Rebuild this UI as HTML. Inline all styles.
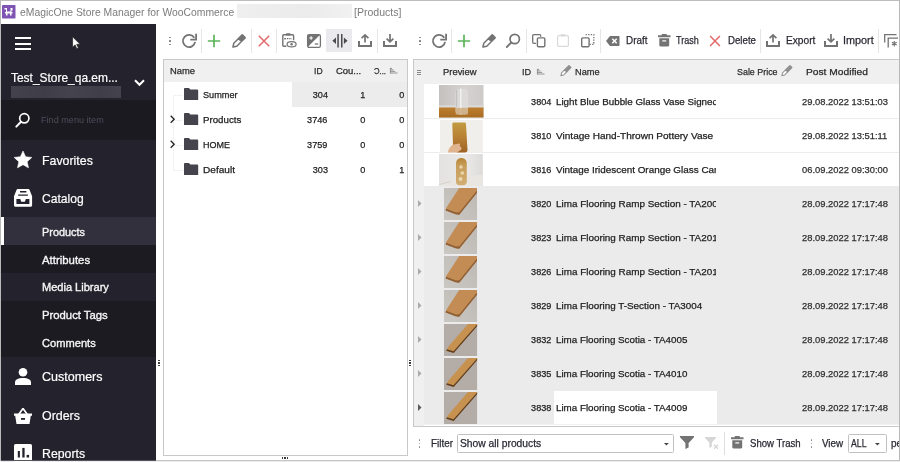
<!DOCTYPE html>
<html><head><meta charset="utf-8"><title>eMagicOne Store Manager for WooCommerce</title>
<style>

*{box-sizing:border-box;margin:0;padding:0}
html,body{width:900px;height:462px;overflow:hidden;background:#fff}
body{position:relative;font-family:"Liberation Sans",sans-serif;color:#262626}
.a{position:absolute}
.t{position:absolute;white-space:nowrap;line-height:1;transform-origin:0 50%}
.d{-webkit-text-stroke:.25px currentColor}
.d2{-webkit-text-stroke:.35px currentColor}
.d1{-webkit-text-stroke:.2px currentColor}
svg{position:absolute;overflow:visible}

</style></head>
<body>
<div class="a" style="left:0px;top:0px;width:900px;height:1px;background:#bdbdbd;"></div>
<div class="a" style="left:0px;top:0px;width:1px;height:462px;background:#b9b9b9;"></div>
<div class="a" style="left:898.5px;top:0px;width:1.5px;height:462px;background:#b8b8b8;"></div>
<div class="a" style="left:0px;top:460px;width:900px;height:1px;background:#c4c4c4;"></div>
<div class="a" style="left:0px;top:461px;width:900px;height:1px;background:#ececec;"></div>
<svg style="left:1.5px;top:5px" width="13.5" height="13.5" viewBox="0 0 27 27"><rect width="27" height="27" rx="1.5" fill="#7f54b3"/><path d="M5 6h5v7h7V6h4v5h-2v3h2v3h-2v4h-3v-4h-5v4H8v-4H6v-3h2V9H5z" fill="#fff"/></svg>
<span class="t" style="left:20px;top:7px;font-size:11.2px;color:#7b7b7b;transform:scaleX(0.9271);">eMagicOne Store Manager for WooCommerce</span>
<div class="a" style="left:237px;top:3.5px;width:115px;height:14px;background:linear-gradient(90deg,#efefef,#ebebeb 60%,#f1f1f1);border-radius:1px;filter:blur(.6px)"></div>
<span class="t" style="left:353.5px;top:7px;font-size:11.2px;color:#7b7b7b;transform:scaleX(0.9420);">[Products]</span>
<div class="a" style="left:1px;top:24px;width:155px;height:436px;background:#24232d;"></div>
<div class="a" style="left:1px;top:100px;width:155px;height:40px;background:#1b1a21;"></div>
<div class="a" style="left:1px;top:217px;width:155px;height:28px;background:#32303c;"></div>
<div class="a" style="left:1px;top:217px;width:3px;height:28px;background:#ffffff;"></div>
<div class="a" style="left:1px;top:245px;width:155px;height:28px;background:#1c1b22;"></div>
<div class="a" style="left:1px;top:301px;width:155px;height:56px;background:#1c1b22;"></div>
<div class="a" style="left:15px;top:37px;width:16px;height:2px;background:#fff;"></div>
<div class="a" style="left:15px;top:42.5px;width:16px;height:2px;background:#fff;"></div>
<div class="a" style="left:15px;top:48px;width:16px;height:2px;background:#fff;"></div>
<svg style="left:72px;top:35.5px" width="9" height="14" viewBox="0 0 9 14"><path d="M.6.8v10.4l2.5-2.3 1.7 3.9 1.6-.7-1.7-3.8h3.4z" fill="#fff" stroke="#222" stroke-width=".7"/></svg>
<span class="t d1" style="left:11px;top:72px;font-size:12.9px;color:#fff;transform:scaleX(0.9268);">Test_Store_qa.em...</span>
<div class="a" style="left:11px;top:85.8px;width:110px;height:12.4px;background:linear-gradient(90deg,#43424c,#3f3e48 30%,#45444e 55%,#403f49 80%,#44434d);filter:blur(.6px)"></div>
<svg style="left:134px;top:78.5px" width="11" height="8" viewBox="0 0 11 8"><path d="M1 1.2l4.5 4.6L10 1.2" fill="none" stroke="#fff" stroke-width="2"/></svg>
<svg style="left:15px;top:112px" width="16" height="16" viewBox="0 0 16 16"><circle cx="9.3" cy="6.3" r="4.6" fill="none" stroke="#fff" stroke-width="1.7"/><path d="M6 9.8L1.3 14.6" stroke="#fff" stroke-width="2" stroke-linecap="round"/></svg>
<span class="t" style="left:41px;top:115px;font-size:9.4px;color:#4d4c58;transform:scaleX(0.9710);">Find menu item</span>
<svg style="left:14px;top:151px" width="18" height="17" viewBox="0 0 18 17"><path d="M9.00 0.00L11.59 5.74L17.84 6.43L13.18 10.66L14.47 16.82L9.00 13.70L3.53 16.82L4.82 10.66L0.16 6.43L6.41 5.74z" fill="#fff" stroke="#fff" stroke-width=".6" stroke-linejoin="round"/></svg>
<span class="t d1" style="left:42.2px;top:155px;font-size:12.9px;color:#fff;transform:scaleX(0.9595);">Favorites</span>
<svg style="left:13.800px;top:189.200px" width="18.100" height="17.800" viewBox="0 0 18.100 17.800"><path d="M3.800 0h10.500c.6 0 1.100.3 1.300.9l2.500 6.300v9.100c0 .8-.7 1.500-1.500 1.500h-15.100c-.8 0-1.500-.7-1.500-1.500V7.200L2.500.9C2.700.3 3.200 0 3.800 0z" fill="#fff"/><path d="M6 2.100h6.400v1.300H6zM4.200 5.600h9.700v1.200H4.200z" fill="#24232d"/><path d="M2.400 10h3.900l.9 2.700h3.700l.9-2.700h3.600v5.100H2.400z" fill="#24232d"/></svg>
<span class="t d1" style="left:42.4px;top:193px;font-size:12.9px;color:#fff;transform:scaleX(0.9401);">Catalog</span>
<span class="t d2" style="left:42.2px;top:227px;font-size:11.2px;color:#f6f6f6;transform:scaleX(0.9729);">Products</span>
<span class="t d2" style="left:42.2px;top:255px;font-size:11.2px;color:#f6f6f6;transform:scaleX(1.0188);">Attributes</span>
<span class="t d2" style="left:42.2px;top:282px;font-size:11.2px;color:#f6f6f6;transform:scaleX(0.9860);">Media Library</span>
<span class="t d2" style="left:42.2px;top:310px;font-size:11.2px;color:#f6f6f6;transform:scaleX(1.0097);">Product Tags</span>
<span class="t d2" style="left:42.2px;top:338px;font-size:11.2px;color:#f6f6f6;transform:scaleX(0.9936);">Comments</span>
<svg style="left:15px;top:368px" width="16" height="17" viewBox="0 0 16 17"><circle cx="8" cy="4.300" r="4.300" fill="#fff"/><path d="M0 17v-2.500C0 11.500 3 10 8 10s8 1.500 8 4.500V17z" fill="#fff"/></svg>
<span class="t d1" style="left:42.4px;top:371px;font-size:12.9px;color:#fff;transform:scaleX(0.9717);">Customers</span>
<svg style="left:14px;top:407px" width="18" height="17" viewBox="0 0 18 17"><path d="M9 1.500L4.800 7.200M9 1.500l4.200 5.700" stroke="#fff" stroke-width="1.700" fill="none"/><path d="M0 6.500h18v2.200h-1.200L15.500 17h-13L1.200 8.700H0z" fill="#fff"/><rect x="7" y="11" width="4" height="1.800" fill="#24232d"/></svg>
<span class="t d1" style="left:42.4px;top:410px;font-size:12.9px;color:#fff;transform:scaleX(0.9639);">Orders</span>
<svg style="left:14px;top:444.200px" width="18" height="18" viewBox="0 0 18 18"><rect width="18" height="18" rx="1.600" fill="#fff"/><rect x="3.800" y="7" width="2.100" height="6.500" fill="#24232d"/><rect x="8.300" y="3.900" width="2.300" height="9.600" fill="#24232d"/><rect x="12.600" y="10.900" width="2.500" height="2.600" fill="#24232d"/></svg>
<span class="t d1" style="left:42.4px;top:448px;font-size:12.9px;color:#fff;transform:scaleX(0.9542);">Reports</span>
<div class="a" style="left:1px;top:460px;width:155px;height:1px;background:#55545c;"></div>
<div class="a" style="left:158px;top:359.6px;width:2.3px;height:1.4px;background:#3c3c3c;"></div>
<div class="a" style="left:409px;top:359.6px;width:2.1px;height:1.4px;background:#3c3c3c;"></div>
<div class="a" style="left:158px;top:362.4px;width:2.3px;height:1.4px;background:#3c3c3c;"></div>
<div class="a" style="left:409px;top:362.4px;width:2.1px;height:1.4px;background:#3c3c3c;"></div>
<div class="a" style="left:158px;top:365.1px;width:2.3px;height:1.4px;background:#3c3c3c;"></div>
<div class="a" style="left:409px;top:365.1px;width:2.1px;height:1.4px;background:#3c3c3c;"></div>
<div class="a" style="left:281.6px;top:457.4px;width:1.4px;height:1.7px;background:#3c3c3c;"></div>
<div class="a" style="left:284.3px;top:457.4px;width:1.4px;height:1.7px;background:#3c3c3c;"></div>
<div class="a" style="left:287px;top:457.4px;width:1.4px;height:1.7px;background:#3c3c3c;"></div>
<div class="a" style="left:168.79999999999998px;top:36.6px;width:1.8px;height:1.8px;background:#777;border-radius:.4px"></div><div class="a" style="left:168.79999999999998px;top:40.1px;width:1.8px;height:1.8px;background:#777;border-radius:.4px"></div><div class="a" style="left:168.79999999999998px;top:43.6px;width:1.8px;height:1.8px;background:#777;border-radius:.4px"></div>
<svg style="left:180.8px;top:32.8px" width="16" height="16" viewBox="-8 -8 16 16"><path d="M5.300 -3.200A6.100 6.100 0 1 0 6.100 .9" fill="none" stroke="#737373" stroke-width="1.800"/><path d="M7.100 -7.200v5.900H1.300" fill="none" stroke="#737373" stroke-width="1.800"/></svg>
<div class="a" style="left:201.1px;top:28.5px;width:1px;height:24.200000000000003px;background:#e6e6e6;"></div>
<svg style="left:207px;top:33.8px" width="14" height="14" viewBox="-7 -7 14 14"><path d="M-6.200 0H6.200M0-6.200V6.200" stroke="#5bb55b" stroke-width="1.700"/></svg>
<svg style="left:231.6px;top:34.2px" width="14.0" height="13.6" viewBox="0 0 14 13.600"><g transform="translate(6.900,7.100) rotate(45)"><path d="M-2.100 -1.500v6.600L0 8.500l2.100-3.400v-6.600z" fill="#fff" stroke="#737373" stroke-width="1.500" stroke-linejoin="round"/><rect x="-2.850" y="-7.600" width="5.700" height="6.300" rx=".9" fill="#737373"/></g></svg>
<div class="a" style="left:250.9px;top:28.5px;width:1px;height:24.200000000000003px;background:#e6e6e6;"></div>
<svg style="left:257.1px;top:33.8px" width="14" height="14" viewBox="-7 -7 14 14"><path d="M-5.2 -5.2L5.2 5.2M5.2 -5.2L-5.2 5.2" stroke="#e36666" stroke-width="1.45"/></svg>
<div class="a" style="left:275.8px;top:28.5px;width:1px;height:24.200000000000003px;background:#e6e6e6;"></div>
<svg style="left:282.400px;top:33.400px" width="14.500" height="14.500" viewBox="0 0 14.500 14.500"><path d="M4.300 13.200H1.800c-.6 0-1-.4-1-1V2.800c0-.6.400-1 1-1h8.800c.6 0 1 .4 1 1v4.500" fill="none" stroke="#737373" stroke-width="1.400"/><rect x="3.800" y=".2" width="4.800" height="2.400" rx="1" fill="#737373"/><path d="M2.800 5.600h7M2.800 5.200v1.600" stroke="#737373" stroke-width="1.300" stroke-dasharray="1.400 .8"/><ellipse cx="9.600" cy="11.300" rx="4.500" ry="2.600" fill="#fff" stroke="#737373" stroke-width="1.200"/><circle cx="9.600" cy="11.300" r="1.200" fill="#737373"/></svg>
<svg style="left:307px;top:33.800px" width="14" height="14" viewBox="0 0 14 14"><rect x=".6" y=".6" width="12.800" height="12.800" rx="1.600" fill="#fff" stroke="#737373" stroke-width="1.300"/><path d="M1 1h11.800L1 12.800z" fill="#737373"/><path d="M2.400 4h3.400M4.100 2.300v3.400" stroke="#fff" stroke-width="1.100"/><path d="M7.800 10h3.400" stroke="#737373" stroke-width="1.300"/></svg>
<div class="a" style="left:326.2px;top:28.5px;width:26px;height:23.8px;background:#e9e9ee;"></div>
<svg style="left:331.500px;top:34px" width="16" height="13.500" viewBox="0 0 16 13.500"><rect x="5.300" y="0" width="1.500" height="13.500" fill="#4a4a4a"/><rect x="9" y="0" width="1.500" height="13.500" fill="#4a4a4a"/><path d="M4 3.600v6.300L.4 6.750z" fill="#4a4a4a"/><path d="M11.900 3.600v6.300l3.600-3.150z" fill="#4a4a4a"/></svg>
<svg style="left:357.8px;top:34.2px" width="14" height="13" viewBox="0 0 14 13"><path d="M1 7v5h12V7" fill="none" stroke="#737373" stroke-width="2"/><path d="M7 8.500V1M3.600 4.200L7 .9l3.400 3.300" fill="none" stroke="#737373" stroke-width="1.700"/></svg>
<div class="a" style="left:377.0px;top:28.5px;width:1px;height:24.200000000000003px;background:#e6e6e6;"></div>
<svg style="left:383px;top:34.2px" width="14" height="13" viewBox="0 0 14 13"><path d="M1 7v5h12V7" fill="none" stroke="#737373" stroke-width="2"/><path d="M7 0v7.800M3.600 4.600L7 7.900l3.400-3.300" fill="none" stroke="#737373" stroke-width="1.700"/></svg>
<div class="a" style="left:163px;top:58.5px;width:245px;height:397px;background:#fff;border:1px solid #c9c9c9"></div>
<div class="a" style="left:164px;top:59.5px;width:243px;height:22.5px;background:#f0f0f0;"></div>
<div class="a" style="left:291.5px;top:82px;width:115.5px;height:25px;background:#ececec;"></div>
<span class="t d" style="left:170px;top:66px;font-size:9.6px;color:#2b2b2b;transform:scaleX(0.9763);">Name</span>
<span class="t d" style="left:314.4px;top:66px;font-size:9.6px;color:#2b2b2b;transform:scaleX(0.8958);">ID</span>
<span class="t d" style="left:336.4px;top:66px;font-size:9.6px;color:#2b2b2b;transform:scaleX(0.9839);">Cou...</span>
<span class="t d" style="left:374px;top:66px;font-size:9.6px;color:#2b2b2b;transform:scaleX(0.8035);">Ɔ...</span>
<svg style="left:389.8px;top:67.7px" width="7.500" height="5.500" viewBox="0 0 7.500 5.500"><path d="M0 .4h2M0 1.900h3.500M0 3.400h5.200M0 5h7.500" stroke="#8a8a8a" stroke-width=".9"/><path d="M.4 0v5.500" stroke="#8a8a8a" stroke-width=".8"/></svg>
<div class="a" style="left:173px;top:95px;width:1px;height:76px;background:#f3f3f3;"></div>
<div class="a" style="left:173px;top:95px;width:10px;height:1px;background:#f3f3f3;"></div>
<div class="a" style="left:173px;top:120px;width:10px;height:1px;background:#f3f3f3;"></div>
<div class="a" style="left:173px;top:145px;width:10px;height:1px;background:#f3f3f3;"></div>
<div class="a" style="left:173px;top:170px;width:10px;height:1px;background:#f3f3f3;"></div>
<svg style="left:183.800px;top:88px" width="14.200" height="12" viewBox="0 0 14.200 12"><path d="M0 .8c0-.4.300-.800.800-.800h4.200l1.300 1.600h7.100c.4 0 .8.300.8.800V12H0z" fill="#45444c"/></svg>
<span class="t d" style="left:202.9px;top:90px;font-size:9.6px;color:#222;transform:scaleX(0.9539);">Summer</span>
<span class="t d" style="right:572.3px;top:90px;font-size:9.6px;transform-origin:100% 50%;color:#222;transform:scaleX(0.9500);">304</span>
<span class="t d" style="right:534.5px;top:90px;font-size:9.6px;transform-origin:100% 50%;color:#222;transform:scaleX(0.9500);">1</span>
<span class="t d" style="right:495.4px;top:90px;font-size:9.6px;transform-origin:100% 50%;color:#222;transform:scaleX(0.9500);">0</span>
<svg style="left:183.800px;top:113px" width="14.200" height="12" viewBox="0 0 14.200 12"><path d="M0 .8c0-.4.300-.800.800-.800h4.200l1.300 1.600h7.100c.4 0 .8.300.8.800V12H0z" fill="#45444c"/></svg>
<span class="t d" style="left:202.9px;top:115px;font-size:9.6px;color:#222;transform:scaleX(1.0110);">Products</span>
<span class="t d" style="right:572.3px;top:115px;font-size:9.6px;transform-origin:100% 50%;color:#222;transform:scaleX(0.9500);">3746</span>
<span class="t d" style="right:534.5px;top:115px;font-size:9.6px;transform-origin:100% 50%;color:#222;transform:scaleX(0.9500);">0</span>
<span class="t d" style="right:495.4px;top:115px;font-size:9.6px;transform-origin:100% 50%;color:#222;transform:scaleX(0.9500);">0</span>
<svg style="left:170.200px;top:115.3px" width="5" height="8.500" viewBox="0 0 5 8.500"><path d="M.7.700l3.500 3.550L.7 7.800" fill="none" stroke="#222" stroke-width="1.300"/></svg>
<svg style="left:183.800px;top:138px" width="14.200" height="12" viewBox="0 0 14.200 12"><path d="M0 .8c0-.4.300-.800.800-.800h4.200l1.300 1.600h7.100c.4 0 .8.300.8.800V12H0z" fill="#45444c"/></svg>
<span class="t d" style="left:202.9px;top:140px;font-size:9.6px;color:#222;transform:scaleX(0.9375);">HOME</span>
<span class="t d" style="right:572.3px;top:140px;font-size:9.6px;transform-origin:100% 50%;color:#222;transform:scaleX(0.9500);">3759</span>
<span class="t d" style="right:534.5px;top:140px;font-size:9.6px;transform-origin:100% 50%;color:#222;transform:scaleX(0.9500);">0</span>
<span class="t d" style="right:495.4px;top:140px;font-size:9.6px;transform-origin:100% 50%;color:#222;transform:scaleX(0.9500);">0</span>
<svg style="left:170.200px;top:140.3px" width="5" height="8.500" viewBox="0 0 5 8.500"><path d="M.7.700l3.500 3.550L.7 7.800" fill="none" stroke="#222" stroke-width="1.300"/></svg>
<svg style="left:183.800px;top:163px" width="14.200" height="12" viewBox="0 0 14.200 12"><path d="M0 .8c0-.4.300-.800.800-.800h4.200l1.300 1.600h7.100c.4 0 .8.300.8.800V12H0z" fill="#45444c"/></svg>
<span class="t d" style="left:202.9px;top:165px;font-size:9.6px;color:#222;transform:scaleX(1.0520);">Default</span>
<span class="t d" style="right:572.3px;top:165px;font-size:9.6px;transform-origin:100% 50%;color:#222;transform:scaleX(0.9500);">303</span>
<span class="t d" style="right:534.5px;top:165px;font-size:9.6px;transform-origin:100% 50%;color:#222;transform:scaleX(0.9500);">0</span>
<span class="t d" style="right:495.4px;top:165px;font-size:9.6px;transform-origin:100% 50%;color:#222;transform:scaleX(0.9500);">1</span>
<div class="a" style="left:419.1px;top:36.6px;width:1.8px;height:1.8px;background:#777;border-radius:.4px"></div><div class="a" style="left:419.1px;top:40.1px;width:1.8px;height:1.8px;background:#777;border-radius:.4px"></div><div class="a" style="left:419.1px;top:43.6px;width:1.8px;height:1.8px;background:#777;border-radius:.4px"></div>
<svg style="left:431.1px;top:32.8px" width="16" height="16" viewBox="-8 -8 16 16"><path d="M5.300 -3.200A6.100 6.100 0 1 0 6.100 .9" fill="none" stroke="#737373" stroke-width="1.800"/><path d="M7.100 -7.200v5.900H1.300" fill="none" stroke="#737373" stroke-width="1.800"/></svg>
<div class="a" style="left:451.4px;top:28.5px;width:1px;height:24.200000000000003px;background:#e6e6e6;"></div>
<svg style="left:457.3px;top:33.8px" width="14" height="14" viewBox="-7 -7 14 14"><path d="M-6.200 0H6.200M0-6.200V6.200" stroke="#5bb55b" stroke-width="1.700"/></svg>
<svg style="left:481.9px;top:34.2px" width="14.0" height="13.6" viewBox="0 0 14 13.600"><g transform="translate(6.900,7.100) rotate(45)"><path d="M-2.100 -1.500v6.600L0 8.500l2.100-3.400v-6.600z" fill="#fff" stroke="#737373" stroke-width="1.500" stroke-linejoin="round"/><rect x="-2.850" y="-7.600" width="5.700" height="6.300" rx=".9" fill="#737373"/></g></svg>
<svg style="left:506px;top:33px" width="15" height="15" viewBox="0 0 15 15"><circle cx="8.700" cy="6" r="4.700" fill="none" stroke="#737373" stroke-width="1.700"/><path d="M5.300 9.500L.8 14" stroke="#737373" stroke-width="1.800" stroke-linecap="round"/></svg>
<div class="a" style="left:525.5px;top:28.5px;width:1px;height:24.200000000000003px;background:#e6e6e6;"></div>
<svg style="left:532px;top:34px" width="13.500" height="13.500" viewBox="0 0 13.500 13.500"><path d="M4 9.300H1.700c-.6 0-1-.4-1-1V1.700c0-.6.400-1 1-1h6c.6 0 1 .4 1 1v1" fill="none" stroke="#737373" stroke-width="1.300"/><rect x="5.400" y="3.900" width="7.400" height="8.900" rx="1.100" fill="#fff" stroke="#737373" stroke-width="1.400"/></svg>
<svg style="left:557.200px;top:34px" width="12" height="13" viewBox="0 0 12 13"><rect x=".6" y="1.600" width="10.800" height="10.800" rx="1.100" fill="#fff" stroke="#d9d9d9" stroke-width="1.200"/><rect x="3.400" y=".2" width="5.200" height="2.200" rx="1" fill="#d9d9d9"/></svg>
<svg style="left:580.800px;top:34px" width="13.500" height="13.500" viewBox="0 0 13.500 13.500"><path d="M4.600 .7h8.200v9.700H8.600" fill="none" stroke="#737373" stroke-width="1.300" stroke-dasharray="1.300 1.300"/><rect x=".7" y="3.900" width="7.400" height="8.900" rx="1.100" fill="#fff" stroke="#737373" stroke-width="1.400"/></svg>
<div class="a" style="left:599.8px;top:28.5px;width:1px;height:24.200000000000003px;background:#e6e6e6;"></div>
<svg style="left:606px;top:35.500px" width="13.500" height="10" viewBox="0 0 13.500 10"><path d="M4 0h8.500c.6 0 1 .4 1 1v8c0 .6-.4 1-1 1H4L0 5z" fill="#737373"/><path d="M6.300 2.800l4.400 4.400M10.700 2.800L6.300 7.200" stroke="#fff" stroke-width="1.500"/></svg>
<span class="t d" style="left:625.8px;top:35px;font-size:10.6px;color:#2a2a35;transform:scaleX(0.9316);">Draft</span>
<svg style="left:657.5px;top:34px" width="12.5" height="12.5" viewBox="0 0 12.500 12.500"><path d="M4 0h4.500l.5 1.300h3.500v2H0v-2h3.500z" fill="#737373"/><path d="M1.300 4.300h9.900v7c0 .7-.5 1.200-1.200 1.200H2.500c-.7 0-1.200-.5-1.200-1.200z" fill="#737373"/><rect x="4.300" y="6.300" width="3.900" height="1.200" fill="#fff"/></svg>
<span class="t d" style="left:676.2px;top:35px;font-size:10.6px;color:#2a2a35;transform:scaleX(0.8539);">Trash</span>
<svg style="left:708px;top:33.8px" width="14" height="14" viewBox="-7 -7 14 14"><path d="M-4.9 -4.9L4.9 4.9M4.9 -4.9L-4.9 4.9" stroke="#e36666" stroke-width="1.45"/></svg>
<span class="t d" style="left:728px;top:35px;font-size:10.6px;color:#2a2a35;transform:scaleX(0.9138);">Delete</span>
<div class="a" style="left:760.0px;top:28.5px;width:1px;height:24.200000000000003px;background:#e6e6e6;"></div>
<svg style="left:766px;top:34.2px" width="14" height="13" viewBox="0 0 14 13"><path d="M1 7v5h12V7" fill="none" stroke="#737373" stroke-width="2"/><path d="M7 8.500V1M3.600 4.200L7 .9l3.400 3.300" fill="none" stroke="#737373" stroke-width="1.700"/></svg>
<span class="t d" style="left:785.6px;top:35px;font-size:10.6px;color:#2a2a35;transform:scaleX(0.9597);">Export</span>
<svg style="left:823.7px;top:34.2px" width="14" height="13" viewBox="0 0 14 13"><path d="M1 7v5h12V7" fill="none" stroke="#737373" stroke-width="2"/><path d="M7 0v7.800M3.600 4.600L7 7.900l3.400-3.300" fill="none" stroke="#737373" stroke-width="1.700"/></svg>
<span class="t d" style="left:843.3px;top:35px;font-size:10.6px;color:#2a2a35;transform:scaleX(1.0220);">Import</span>
<div class="a" style="left:878.2px;top:28.5px;width:1px;height:24.200000000000003px;background:#e6e6e6;"></div>
<svg style="left:884.300px;top:34px" width="14" height="13.500" viewBox="0 0 14 13.500"><path d="M.7 8.500V.7h11.800" fill="none" stroke="#737373" stroke-width="1.300"/><path d="M4.200 13.500V4.200h9.800" fill="none" stroke="#737373" stroke-width="1.300"/><path d="M10.300 7v5.400M7.900 8.300l4.800 2.800M12.700 8.300l-4.800 2.800" stroke="#737373" stroke-width="1.100"/></svg>
<div class="a" style="left:413px;top:58.5px;width:486px;height:368.5px;background:#fff;border:1px solid #c9c9c9;border-right:none"></div>
<div class="a" style="left:414px;top:59.5px;width:484.5px;height:24.5px;background:#f0f0f0;"></div>
<div class="a" style="left:414px;top:84px;width:10px;height:342px;background:#f0f0f0;"></div>
<div class="a" style="left:417px;top:69.5px;width:4px;height:1px;background:#8a8a8a;"></div>
<div class="a" style="left:417px;top:71.5px;width:4px;height:1px;background:#8a8a8a;"></div>
<div class="a" style="left:417px;top:73.5px;width:4px;height:1px;background:#8a8a8a;"></div>
<span class="t d" style="left:443px;top:67px;font-size:9.6px;color:#2b2b2b;transform:scaleX(0.9811);">Preview</span>
<span class="t d" style="left:522.3px;top:67px;font-size:9.6px;color:#2b2b2b;transform:scaleX(0.9479);">ID</span>
<svg style="left:536.7px;top:69.3px" width="7.500" height="5.500" viewBox="0 0 7.500 5.500"><path d="M0 .4h2M0 1.900h3.500M0 3.400h5.200M0 5h7.500" stroke="#8a8a8a" stroke-width=".9"/><path d="M.4 0v5.500" stroke="#8a8a8a" stroke-width=".8"/></svg>
<svg style="left:559.9px;top:66.3px" width="10.500" height="10.500" viewBox="0 0 10.500 10.500"><g transform="translate(5.600,4.900) rotate(45)"><path d="M-1.500 0v4.300L0 6.600l1.500-2.300V0z" fill="#fbfbfb" stroke="#8f8f8f" stroke-width="1"/><rect x="-2" y="-6.800" width="4" height="7" rx=".8" fill="#8f8f8f"/></g></svg>
<span class="t d" style="left:575px;top:67px;font-size:9.6px;color:#2b2b2b;transform:scaleX(0.9606);">Name</span>
<span class="t d" style="left:736.6px;top:67px;font-size:9.6px;color:#2b2b2b;transform:scaleX(0.9279);">Sale Price</span>
<svg style="left:781.4px;top:66.3px" width="10.500" height="10.500" viewBox="0 0 10.500 10.500"><g transform="translate(5.600,4.900) rotate(45)"><path d="M-1.500 0v4.300L0 6.600l1.500-2.300V0z" fill="#fbfbfb" stroke="#8f8f8f" stroke-width="1"/><rect x="-2" y="-6.800" width="4" height="7" rx=".8" fill="#8f8f8f"/></g></svg>
<span class="t d" style="left:805.6px;top:67px;font-size:9.6px;color:#2b2b2b;transform:scaleX(1.0643);">Post Modified</span>
<div class="a" style="left:424px;top:117.5px;width:474.5px;height:1px;background:#ececec;"></div>
<span class="t d" style="right:348.4px;top:97px;font-size:9.6px;transform-origin:100% 50%;color:#222;transform:scaleX(0.9500);">3804</span>
<div class="a" style="left:555px;top:92px;width:160.700px;height:18px;overflow:hidden"><span class="t d" style="left:0.5px;top:5px;font-size:9.6px;color:#222;transform:scaleX(1.0200);">Light Blue Bubble Glass Vase Signed</span></div>
<span class="t d" style="left:801.8px;top:97px;font-size:9.6px;color:#2e2e2e;transform:scaleX(0.9760);">29.08.2022 13:51:03</span>
<div class="a" style="left:424px;top:151.5px;width:474.5px;height:1px;background:#ececec;"></div>
<span class="t d" style="right:348.4px;top:131px;font-size:9.6px;transform-origin:100% 50%;color:#222;transform:scaleX(0.9500);">3810</span>
<div class="a" style="left:555px;top:126px;width:160.700px;height:18px;overflow:hidden"><span class="t d" style="left:0.5px;top:5px;font-size:9.6px;color:#222;transform:scaleX(1.0470);">Vintage Hand-Thrown Pottery Vase</span></div>
<span class="t d" style="left:801.8px;top:131px;font-size:9.6px;color:#2e2e2e;transform:scaleX(0.9760);">29.08.2022 13:51:11</span>
<div class="a" style="left:424px;top:185.5px;width:474.5px;height:1px;background:#ececec;"></div>
<span class="t d" style="right:348.4px;top:165px;font-size:9.6px;transform-origin:100% 50%;color:#222;transform:scaleX(0.9500);">3816</span>
<div class="a" style="left:555px;top:160px;width:160.700px;height:18px;overflow:hidden"><span class="t d" style="left:0.5px;top:5px;font-size:9.6px;color:#222;transform:scaleX(1.0300);">Vintage Iridescent Orange Glass Candle</span></div>
<span class="t d" style="left:801.8px;top:165px;font-size:9.6px;color:#2e2e2e;transform:scaleX(0.9760);">06.09.2022 09:30:00</span>
<div class="a" style="left:424px;top:186px;width:474.5px;height:34px;background:#ebebeb;"></div>
<div class="a" style="left:424px;top:219.5px;width:474.5px;height:1px;background:#f1f1f1;"></div>
<span class="t d" style="right:348.4px;top:199px;font-size:9.6px;transform-origin:100% 50%;color:#222;transform:scaleX(0.9500);">3820</span>
<div class="a" style="left:555px;top:194px;width:160.700px;height:18px;overflow:hidden"><span class="t d" style="left:0.5px;top:5px;font-size:9.6px;color:#222;transform:scaleX(1.0300);">Lima Flooring Ramp Section - TA2000</span></div>
<span class="t d" style="left:801.8px;top:199px;font-size:9.6px;color:#2e2e2e;transform:scaleX(0.9760);">28.09.2022 17:17:48</span>
<svg style="left:418px;top:199.5px" width="3.500" height="7" viewBox="0 0 3.500 7"><path d="M0 0l3.500 3.500L0 7z" fill="#ababab"/></svg>
<div class="a" style="left:424px;top:220px;width:474.5px;height:34px;background:#ebebeb;"></div>
<div class="a" style="left:424px;top:253.5px;width:474.5px;height:1px;background:#f1f1f1;"></div>
<span class="t d" style="right:348.4px;top:233px;font-size:9.6px;transform-origin:100% 50%;color:#222;transform:scaleX(0.9500);">3823</span>
<div class="a" style="left:555px;top:228px;width:160.700px;height:18px;overflow:hidden"><span class="t d" style="left:0.5px;top:5px;font-size:9.6px;color:#222;transform:scaleX(1.0300);">Lima Flooring Ramp Section - TA2010</span></div>
<span class="t d" style="left:801.8px;top:233px;font-size:9.6px;color:#2e2e2e;transform:scaleX(0.9760);">28.09.2022 17:17:48</span>
<svg style="left:418px;top:233.5px" width="3.500" height="7" viewBox="0 0 3.500 7"><path d="M0 0l3.500 3.500L0 7z" fill="#ababab"/></svg>
<div class="a" style="left:424px;top:254px;width:474.5px;height:34px;background:#ebebeb;"></div>
<div class="a" style="left:424px;top:287.5px;width:474.5px;height:1px;background:#f1f1f1;"></div>
<span class="t d" style="right:348.4px;top:267px;font-size:9.6px;transform-origin:100% 50%;color:#222;transform:scaleX(0.9500);">3826</span>
<div class="a" style="left:555px;top:262px;width:160.700px;height:18px;overflow:hidden"><span class="t d" style="left:0.5px;top:5px;font-size:9.6px;color:#222;transform:scaleX(1.0300);">Lima Flooring Ramp Section - TA2015</span></div>
<span class="t d" style="left:801.8px;top:267px;font-size:9.6px;color:#2e2e2e;transform:scaleX(0.9760);">28.09.2022 17:17:48</span>
<svg style="left:418px;top:267.5px" width="3.500" height="7" viewBox="0 0 3.500 7"><path d="M0 0l3.500 3.500L0 7z" fill="#ababab"/></svg>
<div class="a" style="left:424px;top:288px;width:474.5px;height:34px;background:#ebebeb;"></div>
<div class="a" style="left:424px;top:321.5px;width:474.5px;height:1px;background:#f1f1f1;"></div>
<span class="t d" style="right:348.4px;top:301px;font-size:9.6px;transform-origin:100% 50%;color:#222;transform:scaleX(0.9500);">3829</span>
<div class="a" style="left:555px;top:296px;width:160.700px;height:18px;overflow:hidden"><span class="t d" style="left:0.5px;top:5px;font-size:9.6px;color:#222;transform:scaleX(1.0275);">Lima Flooring T-Section - TA3004</span></div>
<span class="t d" style="left:801.8px;top:301px;font-size:9.6px;color:#2e2e2e;transform:scaleX(0.9760);">28.09.2022 17:17:48</span>
<svg style="left:418px;top:301.5px" width="3.500" height="7" viewBox="0 0 3.500 7"><path d="M0 0l3.500 3.500L0 7z" fill="#ababab"/></svg>
<div class="a" style="left:424px;top:322px;width:474.5px;height:34px;background:#ebebeb;"></div>
<div class="a" style="left:424px;top:355.5px;width:474.5px;height:1px;background:#f1f1f1;"></div>
<span class="t d" style="right:348.4px;top:335px;font-size:9.6px;transform-origin:100% 50%;color:#222;transform:scaleX(0.9500);">3832</span>
<div class="a" style="left:555px;top:330px;width:160.700px;height:18px;overflow:hidden"><span class="t d" style="left:0.5px;top:5px;font-size:9.6px;color:#222;transform:scaleX(1.0210);">Lima Flooring Scotia - TA4005</span></div>
<span class="t d" style="left:801.8px;top:335px;font-size:9.6px;color:#2e2e2e;transform:scaleX(0.9760);">28.09.2022 17:17:48</span>
<svg style="left:418px;top:335.5px" width="3.500" height="7" viewBox="0 0 3.500 7"><path d="M0 0l3.500 3.500L0 7z" fill="#ababab"/></svg>
<div class="a" style="left:424px;top:356px;width:474.5px;height:34px;background:#ebebeb;"></div>
<div class="a" style="left:424px;top:389.5px;width:474.5px;height:1px;background:#f1f1f1;"></div>
<span class="t d" style="right:348.4px;top:369px;font-size:9.6px;transform-origin:100% 50%;color:#222;transform:scaleX(0.9500);">3835</span>
<div class="a" style="left:555px;top:364px;width:160.700px;height:18px;overflow:hidden"><span class="t d" style="left:0.5px;top:5px;font-size:9.6px;color:#222;transform:scaleX(1.0210);">Lima Flooring Scotia - TA4010</span></div>
<span class="t d" style="left:801.8px;top:369px;font-size:9.6px;color:#2e2e2e;transform:scaleX(0.9760);">28.09.2022 17:17:48</span>
<svg style="left:418px;top:369.5px" width="3.500" height="7" viewBox="0 0 3.500 7"><path d="M0 0l3.500 3.500L0 7z" fill="#ababab"/></svg>
<div class="a" style="left:424px;top:390px;width:474.5px;height:34px;background:#ebebeb;"></div>
<div class="a" style="left:553.5px;top:391.2px;width:163.3px;height:32.4px;background:#fff;"></div>
<div class="a" style="left:424px;top:423.5px;width:474.5px;height:1px;background:#f1f1f1;"></div>
<span class="t d" style="right:348.4px;top:403px;font-size:9.6px;transform-origin:100% 50%;color:#222;transform:scaleX(0.9500);">3838</span>
<div class="a" style="left:555px;top:398px;width:160.700px;height:18px;overflow:hidden"><span class="t d" style="left:0.5px;top:5px;font-size:9.6px;color:#222;transform:scaleX(1.0210);">Lima Flooring Scotia - TA4009</span></div>
<span class="t d" style="left:801.8px;top:403px;font-size:9.6px;color:#2e2e2e;transform:scaleX(0.9760);">28.09.2022 17:17:48</span>
<svg style="left:418px;top:403.5px" width="3.500" height="7" viewBox="0 0 3.500 7"><path d="M0 0l3.500 3.500L0 7z" fill="#5a5a5a"/></svg>
<svg style="left:438.800px;top:85px" width="44.500" height="32.500" viewBox="0 0 44.500 32.500"><defs><linearGradient id="g1" x1="0" x2="1"><stop offset="0" stop-color="#c3c0be"/><stop offset=".55" stop-color="#d5d3d1"/><stop offset="1" stop-color="#cdcac8"/></linearGradient><linearGradient id="w1" x1="0" x2="0" y1="0" y2="1"><stop offset="0" stop-color="#bd7f30"/><stop offset="1" stop-color="#a86c22"/></linearGradient><filter id="b1"><feGaussianBlur stdDeviation=".7"/></filter></defs><rect width="44.500" height="32.500" fill="url(#g1)"/><rect y="20.400" width="44.500" height="2.300" fill="#dddbd9"/><rect y="22.500" width="44.500" height="10" fill="url(#w1)"/><g filter="url(#b1)"><rect x="16.500" y="4" width="12.500" height="25.500" rx="3.500" fill="#dfdddb" opacity=".8"/><rect x="21" y="3.500" width="1.600" height="26" fill="#f3f2f1" opacity=".9"/><rect x="17" y="5" width="1.200" height="17" fill="#b9b6b4" opacity=".7"/><rect x="16.800" y="23" width="12" height="6.500" fill="#cfae84" opacity=".85"/></g></svg>
<svg style="left:440px;top:119.500px" width="42.800" height="32.500" viewBox="0 0 42.800 32.500"><defs><linearGradient id="v2" x1="0" x2="0" y1="0" y2="1"><stop offset="0" stop-color="#c29b42"/><stop offset=".45" stop-color="#b98335"/><stop offset="1" stop-color="#9f6225"/></linearGradient><filter id="b2"><feGaussianBlur stdDeviation=".6"/></filter></defs><rect width="42.800" height="32.500" fill="#f1efeb"/><g filter="url(#b2)"><path d="M12.300 4c0-1 .6-1.600 1.600-1.600h10.500c1 0 1.600.6 1.600 1.600l1.500 26c0 1.500-1 2.500-2.500 2.500h-8L13 25z" fill="url(#v2)"/><path d="M8 32.500c.3-3.600 2-6 4.600-7.700l6.400-1.400c1.500.2 1.500 1.700.4 2.300l1.800 1.600c.8 1.100.2 2.700-1.200 3.200l-3 2z" fill="#e0b48e"/></g></svg>
<svg style="left:439px;top:153.500px" width="43.800" height="32" viewBox="0 0 43.800 32"><defs><linearGradient id="g3" x1="0" x2="1"><stop offset="0" stop-color="#e3e2e0"/><stop offset=".6" stop-color="#ebeae8"/><stop offset="1" stop-color="#dddbd9"/></linearGradient><linearGradient id="v3" x1="0" x2="0" y1="0" y2="1"><stop offset="0" stop-color="#b58435"/><stop offset=".25" stop-color="#c79c58"/><stop offset="1" stop-color="#d2ae74"/></linearGradient><filter id="b3"><feGaussianBlur stdDeviation=".6"/></filter></defs><rect width="43.800" height="32" fill="url(#g3)"/><path d="M0 29l27-6 16.800-2.500V32H0z" fill="#e9e5e1"/><path d="M0 30.500l12-3" stroke="#cfcbc6" stroke-width=".8"/><g filter="url(#b3)"><path d="M17 9.500c0-3.300 2.400-5.500 5.400-5.500s5.400 2.200 5.400 5.500V28c0 2-1.600 3.200-3.400 3.200h-4c-1.800 0-3.400-1.200-3.400-3.200z" fill="url(#v3)"/><circle cx="22" cy="13" r="1.700" fill="#ead7ad"/><circle cx="23.300" cy="19" r="1.800" fill="#ead7ad"/><circle cx="21.500" cy="25" r="1.900" fill="#ead7ad"/></g></svg>
<svg width="0" height="0" style="left:0;top:0"><defs><filter id="bt"><feGaussianBlur stdDeviation=".45"/></filter><linearGradient id="gr" x1="0" x2="1" y1="1" y2="0"><stop offset="0" stop-color="#cbc7c3"/><stop offset=".6" stop-color="#c2beba"/><stop offset="1" stop-color="#bdb8b4"/></linearGradient></defs></svg>
<svg style="left:444.200px;top:187.5px" width="33" height="32" viewBox="0 0 33 32"><rect width="33" height="32" fill="url(#gr)"/><g filter="url(#bt)"><path d="M15.200 0H33v4.800L15.200 26.800 11.700 26.200 1.700 22.500 2.200 19.900z" fill="#c38c54"/><path d="M2 20.800l10 3.800 3.400-.3L33 2.600v2.200L15.200 26.800l-3.500-.6-10-3.700z" fill="#8f5f36"/></g></svg>
<svg style="left:444.200px;top:221.5px" width="33" height="32" viewBox="0 0 33 32"><rect width="33" height="32" fill="url(#gr)"/><g filter="url(#bt)"><path d="M15.200 0H33v4.800L15.200 26.800 11.700 26.200 1.700 22.500 2.200 19.900z" fill="#c38c54"/><path d="M2 20.800l10 3.800 3.400-.3L33 2.600v2.200L15.200 26.800l-3.500-.6-10-3.700z" fill="#8f5f36"/></g></svg>
<svg style="left:444.200px;top:255.5px" width="33" height="32" viewBox="0 0 33 32"><rect width="33" height="32" fill="url(#gr)"/><g filter="url(#bt)"><path d="M15.200 0H33v4.800L15.200 26.800 11.700 26.200 1.700 22.500 2.200 19.900z" fill="#c38c54"/><path d="M2 20.800l10 3.800 3.400-.3L33 2.600v2.200L15.200 26.800l-3.500-.6-10-3.700z" fill="#8f5f36"/></g></svg>
<svg style="left:444.200px;top:289.5px" width="33" height="32" viewBox="0 0 33 32"><rect width="33" height="32" fill="url(#gr)"/><g filter="url(#bt)"><path d="M15.200 0H33v4.800L15.200 26.800 11.700 26.200 1.700 22.500 2.200 19.900z" fill="#c38c54"/><path d="M2 20.800l10 3.800 3.400-.3L33 2.600v2.200L15.200 26.800l-3.500-.6-10-3.700z" fill="#8f5f36"/></g></svg>
<svg style="left:444.100px;top:323.5px" width="33.100" height="32" viewBox="0 0 33.100 32"><rect width="33.100" height="32" fill="#b4aca7"/><g filter="url(#bt)"><path d="M24 0h9.100v1.700L9.700 29 2.300 26.800 4.500 22.500z" fill="#c7924f"/><path d="M33.100 .6v1.700L9.700 29 2.300 26.800l.6-1.500 6.600 2z" fill="#5f3f24"/></g></svg>
<svg style="left:444.100px;top:357.5px" width="33.100" height="32" viewBox="0 0 33.100 32"><rect width="33.100" height="32" fill="#b4aca7"/><g filter="url(#bt)"><path d="M24 0h9.100v1.700L9.700 29 2.300 26.800 4.500 22.500z" fill="#c7924f"/><path d="M33.100 .6v1.700L9.700 29 2.300 26.800l.6-1.500 6.600 2z" fill="#5f3f24"/></g></svg>
<svg style="left:444.100px;top:391.5px" width="33.100" height="32" viewBox="0 0 33.100 32"><rect width="33.100" height="32" fill="#b4aca7"/><g filter="url(#bt)"><path d="M24 0h9.100v1.700L9.700 29 2.300 26.800 4.500 22.500z" fill="#c7924f"/><path d="M33.100 .6v1.700L9.700 29 2.300 26.800l.6-1.500 6.600 2z" fill="#5f3f24"/></g></svg>
<div class="a" style="left:418.6px;top:439.1px;width:1.8px;height:1.8px;background:#777;border-radius:.4px"></div><div class="a" style="left:418.6px;top:442.6px;width:1.8px;height:1.8px;background:#777;border-radius:.4px"></div><div class="a" style="left:418.6px;top:446.1px;width:1.8px;height:1.8px;background:#777;border-radius:.4px"></div>
<span class="t d" style="left:430.6px;top:439px;font-size:10.3px;color:#2a2a35;transform:scaleX(0.9612);">Filter</span>
<div class="a" style="left:456.7px;top:434px;width:217.6px;height:18.6px;background:#fff;border:1px solid #c0c0c0;border-radius:1.5px"></div>
<span class="t d" style="left:459.5px;top:439px;font-size:10.3px;color:#2a2a35;transform:scaleX(0.9988);">Show all products</span>
<svg style="left:664.200px;top:443px" width="4.800" height="2.400" viewBox="0 0 4.800 2.400"><path d="M0 0h4.800L2.400 2.400z" fill="#444"/></svg>
<svg style="left:680px;top:436.400px" width="14" height="13" viewBox="0 0 14 13"><path d="M0 0h14v1.200L8.600 7v4.600L5.400 13V7L0 1.200z" fill="#737373"/></svg>
<svg style="left:704.600px;top:437px" width="14" height="12.500" viewBox="0 0 14 12.500"><path d="M0 0h11v1L6.800 5.600v4.200L4.300 11V5.600L0 1z" fill="#d6d6d6"/><path d="M9 7.700l4 4M13 7.700l-4 4" stroke="#d6d6d6" stroke-width="1.300"/></svg>
<div class="a" style="left:724.2px;top:432px;width:1px;height:23px;background:#dedede;"></div>
<svg style="left:731px;top:436.4px" width="12.5" height="12.5" viewBox="0 0 12.500 12.500"><path d="M4 0h4.500l.5 1.300h3.500v2H0v-2h3.500z" fill="#737373"/><path d="M1.300 4.300h9.900v7c0 .7-.5 1.200-1.200 1.200H2.500c-.7 0-1.200-.5-1.200-1.200z" fill="#737373"/><rect x="4.300" y="6.300" width="3.900" height="1.200" fill="#fff"/></svg>
<span class="t d" style="left:749.7px;top:439px;font-size:10.3px;color:#2a2a35;transform:scaleX(0.9304);">Show Trash</span>
<div class="a" style="left:810.6px;top:438.8px;width:1.8px;height:1.8px;background:#777;border-radius:.4px"></div><div class="a" style="left:810.6px;top:442.5px;width:1.8px;height:1.8px;background:#777;border-radius:.4px"></div><div class="a" style="left:810.6px;top:446.1px;width:1.8px;height:1.8px;background:#777;border-radius:.4px"></div>
<span class="t d" style="left:822.3px;top:439px;font-size:10.3px;color:#2a2a35;transform:scaleX(0.9531);">View</span>
<div class="a" style="left:847.5px;top:434px;width:39px;height:18.6px;background:#fff;border:1px solid #c0c0c0;border-radius:1.5px"></div>
<span class="t d" style="left:850.5px;top:439px;font-size:10.3px;color:#2a2a35;transform:scaleX(0.8458);">ALL</span>
<svg style="left:875.200px;top:443px" width="4.800" height="2.400" viewBox="0 0 4.800 2.400"><path d="M0 0h4.800L2.400 2.400z" fill="#444"/></svg>
<div class="a" style="left:889px;top:434px;width:9.500px;height:20px;overflow:hidden"><span class="t d" style="left:2.4px;top:5px;font-size:10.3px;color:#2a2a35;transform:scaleX(0.9700);">per</span></div>
</body></html>
